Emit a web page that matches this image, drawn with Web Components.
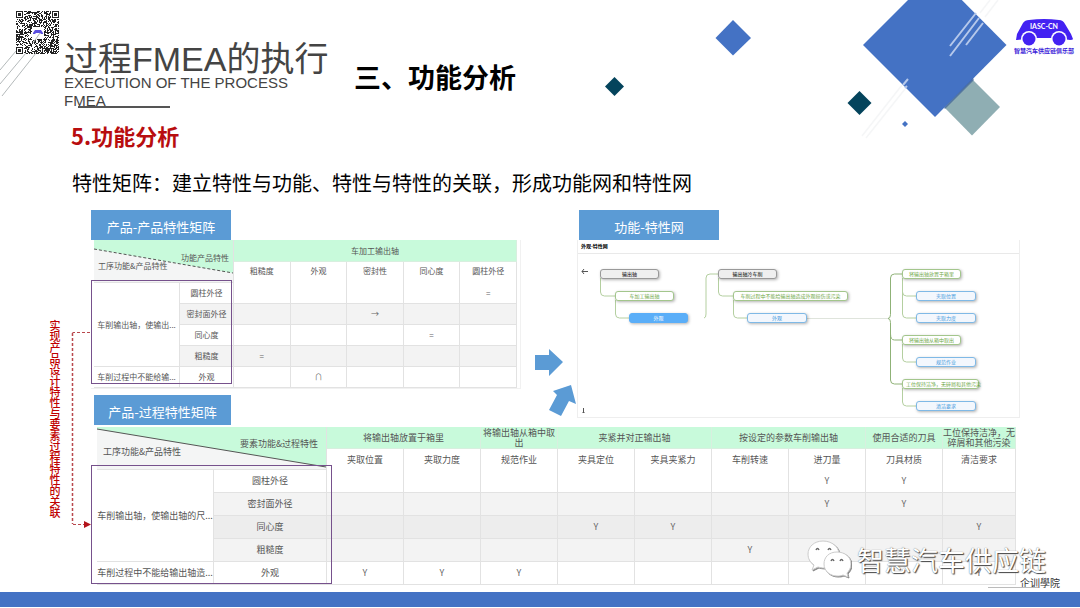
<!DOCTYPE html>
<html lang="zh-CN">
<head>
<meta charset="UTF-8">
<meta name="viewport" content="width=device-width, initial-scale=1">
<title>过程FMEA的执行</title>
<style>
    body {
        margin: 0;
        background: #fff;
        color: #000;
        font-family: "Liberation Sans", "Noto Sans CJK SC", sans-serif;
    }
</style>
</head>
<body>
<fmea-slide>
    <slide-header slot="header">
        <span slot="title">过程FMEA的执行</span>
        <span slot="subtitle">EXECUTION OF THE PROCESS FMEA</span>
        <span slot="section">三、功能分析</span>
    </slide-header>
    <span slot="topic">5.功能分析</span>
    <span slot="summary">特性矩阵：建立特性与功能、特性与特性的关联，形成功能网和特性网</span>
    <link-rail slot="rail">实现产品设计特性与要素过程特性的关联</link-rail>
    <block-label slot="label-product">产品-产品特性矩阵</block-label>
    <feature-matrix slot="matrix-product" name="product"></feature-matrix>
    <flow-arrows slot="arrows"></flow-arrows>
    <block-label slot="label-net">功能-特性网</block-label>
    <feature-net slot="net">外观-特性网</feature-net>
    <block-label slot="label-process">产品-过程特性矩阵</block-label>
    <feature-matrix slot="matrix-process" name="process"></feature-matrix>
    <slide-watermark slot="watermark">智慧汽车供应链</slide-watermark>
    <span slot="school">企训學院</span>
</fmea-slide>

<script>
class FmeaSlide extends HTMLElement {
    constructor() {
        super();
        this.attachShadow({ mode: 'open' });
    }

    connectedCallback() {
        this.shadowRoot.innerHTML = `
            <style>
                :host {
                    position: relative;
                    display: flex;
                    flex-direction: column;
                    min-height: 100vh;
                    overflow: hidden;
                }

                .topic {
                    margin: 10px 0 0 71px;
                    font: bold 22px/30px "Noto Sans CJK SC", sans-serif;
                    color: #b80d0f;
                }

                .summary {
                    margin: 18px 0 0 72px;
                    font: 20px/30px "Noto Sans CJK SC", sans-serif;
                }

                .board {
                    display: grid;
                    grid-template-columns: 42px minmax(0, 430fr) 56px minmax(0, 443fr);
                    grid-template-rows: 185px 32px auto;
                    margin: 12px 60px 0 49px;
                }

                .rail {
                    grid-row: 1 / 4;
                }

                .arrows {
                    grid-area: 1 / 3 / 3 / 4;
                }

                .net {
                    grid-area: 1 / 4 / 3 / 5;
                }

                .process-label {
                    grid-area: 2 / 2;
                    padding-left: 3px;
                }

                .process {
                    grid-area: 3 / 2 / 4 / 5;
                    padding: 0 4px 0 6px;
                }

                .product-table {
                    padding: 0 3px;
                    border: 1px solid #f1f1f1;
                    border-width: 0 1px 1px 0;
                }

                .foot {
                    height: 15px;
                    margin: auto 0 1px;
                    background: #4472c4;
                }

                .watermark {
                    position: absolute;
                    right: 34px;
                    bottom: 28px;
                }

                .school {
                    position: absolute;
                    right: 20px;
                    bottom: 18px;
                    font: 10px/14px "Noto Sans CJK SC", sans-serif;
                    color: #333;
                }

                .school::before {
                    content: "";
                    position: absolute;
                    left: -32px;
                    bottom: 2px;
                    width: 50px;
                    height: 1px;
                    background: #bbb;
                }
            </style>
            <slide-decor></slide-decor>
            <slot name="header"></slot>
            <h2 class="topic"><slot name="topic"></slot></h2>
            <p class="summary"><slot name="summary"></slot></p>
            <main class="board">
                <div class="rail"><slot name="rail"></slot></div>
                <section>
                    <slot name="label-product"></slot>
                    <div class="product-table"><slot name="matrix-product"></slot></div>
                </section>
                <div class="arrows"><slot name="arrows"></slot></div>
                <section class="net">
                    <slot name="label-net"></slot>
                    <slot name="net"></slot>
                </section>
                <div class="process-label"><slot name="label-process"></slot></div>
                <div class="process"><slot name="matrix-process"></slot></div>
            </main>
            <div class="school"><slot name="school"></slot></div>
            <div class="watermark"><slot name="watermark"></slot></div>
            <footer class="foot"></footer>
        `;
    }
}

// Diamonds and hatching behind the header
class SlideDecor extends HTMLElement {
    constructor() {
        super();
        this.attachShadow({ mode: 'open' });
    }

    connectedCallback() {
        this.shadowRoot.innerHTML = `
            <style>
                :host {
                    position: absolute;
                    inset: 0 0 auto 0;
                    height: 150px;
                    z-index: -1;
                }

                svg {
                    position: absolute;
                    top: 0;
                }

                .right {
                    right: 0;
                }

                .left {
                    left: 0;
                }
            </style>
            <svg class="left" width="60" height="110" fill="none" stroke="#b4b9ba">
                <path d="M16 51 0 70M26 53 0 84M40 48 2 96"/>
            </svg>
            <svg class="right" width="480" height="150" viewBox="600 0 480 150">
                <path fill="#8faeb3" d="m972 79 28 28-28 28.500-28-28.500z"/>
                <path fill="#4472c4" d="m935-27 71.500 72L935 117l-72-72z"/>
                <path fill="#2d5292" opacity=".6" d="m973 78-29 30 1 1 29-29z"/>
                <path fill="#4472c4" d="m733 20 18 18-18 17.500L715.500 38z"/>
                <path fill="#4472c4" d="m905 121 3 3-3 3-3-3z"/>
                <path fill="#04445c" d="m614.500 77 9.500 9.500-9.500 9.500-9.500-9.500z"/>
                <path fill="#04445c" d="m859.500 91 12 12-12 12-12-12z"/>
                <path fill="none" stroke="#f5f6f7" stroke-width="1.500" d="M902 85 862 136M905 89 866 138M998 0 985 17M990 0 980 13"/>
                <path fill="none" stroke="#b5c8eb" stroke-width="2" d="M976 13 950 46M979 18 950 56M983 23 966 45M908 79 903 85M907 86 905 88"/>
            </svg>
        `;
    }
}

class SlideHeader extends HTMLElement {
    constructor() {
        super();
        this.attachShadow({ mode: 'open' });
    }

    connectedCallback() {
        this.shadowRoot.innerHTML = `
            <style>
                :host {
                    display: flex;
                    align-items: flex-start;
                    height: 99px;
                    padding: 11px 6px 0 16px;
                }

                .titles {
                    position: relative;
                    width: 266px;
                    margin: 33px 0 0 5px;
                    color: #444;
                }

                .title {
                    margin: 0;
                    font-size: 34px;
                    font-weight: 400;
                    line-height: 30px;
                    white-space: nowrap;
                }

                .subtitle {
                    margin: 0;
                    font-size: 15px;
                    line-height: 18px;
                }

                .titles::after {
                    content: "";
                    position: absolute;
                    left: 14px;
                    bottom: 2px;
                    width: 92px;
                    height: 2px;
                    background: #555;
                }

                .section {
                    margin: 48px 0 0 24px;
                    font: bold 27px/36px "Noto Sans CJK SC", sans-serif;
                }

                club-logo {
                    margin: 7px 0 0 auto;
                }
            </style>
            <qr-code></qr-code>
            <div class="titles">
                <h1 class="title"><slot name="title"></slot></h1>
                <p class="subtitle"><slot name="subtitle"></slot></p>
            </div>
            <div class="section"><slot name="section"></slot></div>
            <club-logo>智慧汽车供应链俱乐部</club-logo>
        `;
    }
}

class ClubLogo extends HTMLElement {
    constructor() {
        super();
        this.attachShadow({ mode: 'open' });
    }

    connectedCallback() {
        this.shadowRoot.innerHTML = `
            <style>
                :host {
                    display: flex;
                    flex-direction: column;
                    align-items: center;
                    font: bold 6px/9px "Noto Sans CJK SC", sans-serif;
                    color: #3b22d8;
                    white-space: nowrap;
                }
            </style>
            <svg width="58" height="28" viewBox="0 0 58 28">
                <path fill="#4322f2" d="M1 22 2 16 8 5Q10 2 14 2 29 0 44 2q4 0 6 4l6 10 2 5q0 1-3 1L41 20H20L2 22z"/>
                <circle cx="14" cy="21" r="8" fill="#fff"/>
                <circle cx="44" cy="21" r="8" fill="#fff"/>
                <circle cx="14" cy="21" r="6.500" fill="#4322f2"/>
                <circle cx="44" cy="21" r="6.500" fill="#4322f2"/>
                <text x="29" y="11" fill="#fff" font-family="Lato, sans-serif" font-size="7" font-weight="700" text-anchor="middle">IASC-CN</text>
            </svg>
            <slot></slot>
        `;
    }
}

class QrCode extends HTMLElement {
    constructor() {
        super();
        this.attachShadow({ mode: 'open' });
    }

    connectedCallback() {
        const size = 43;
        let seed = 77;
        let cells = '';
        for (let y = 0; y < size; y++) {
            for (let x = 0; x < size; x++) {
                seed = (seed * 1103515245 + 12345) % 2147483648;
                const finder = (x < 8 && y < 8) || (x > 34 && y < 8) || (x < 8 && y > 34);
                const middle = x > 15 && x < 28 && y > 15 && y < 28;
                if (!finder && !middle && seed / 2147483648 > 0.47) {
                    cells += `M${x} ${y}h1v1h-1z`;
                }
            }
        }
        const finder = (x, y) => `
            <rect x="${x + 0.5}" y="${y + 0.5}" width="6" height="6" fill="none" stroke="#222"/>
            <rect x="${x + 2}" y="${y + 2}" width="3" height="3" fill="#222"/>`;

        this.shadowRoot.innerHTML = `
            <style>
                :host {
                    display: block;
                    flex: none;
                    width: 43px;
                    height: 43px;
                }
            </style>
            <svg width="43" height="43" viewBox="0 0 43 43" role="img">
                <path fill="#222" d="${cells}"/>
                ${finder(0, 0)}${finder(36, 0)}${finder(0, 36)}
                <path fill="#5b4fe0" d="m17 22 2-3h6l2 3v1h-2l-1-1h-4l-1 1h-2z"/>
                <path stroke="#b4b9ba" d="m24 22-7 10"/>
            </svg>
        `;
    }
}

class BlockLabel extends HTMLElement {
    constructor() {
        super();
        this.attachShadow({ mode: 'open' });
    }

    connectedCallback() {
        this.shadowRoot.innerHTML = `
            <style>
                :host {
                    display: block;
                    width: 140px;
                    box-sizing: border-box;
                    padding-top: 3px;
                    background: #5b9bd5;
                    color: #fff;
                    font: 13px/27px "Noto Sans CJK SC", sans-serif;
                    text-align: center;
                }

                :host([slot="label-net"]) {
                    margin-left: 2px;
                }

                :host([slot="label-process"]) {
                    width: 137px;
                }
            </style>
            <slot></slot>
        `;
    }
}

// Vertical caption with the dashed link between the two framed blocks
class LinkRail extends HTMLElement {
    constructor() {
        super();
        this.attachShadow({ mode: 'open' });
    }

    connectedCallback() {
        this.shadowRoot.innerHTML = `
            <style>
                :host {
                    display: flex;
                    justify-content: space-between;
                    padding-top: 110px;
                    color: #c00000;
                }

                .caption {
                    writing-mode: vertical-rl;
                    font: 500 11px/12px "Noto Sans CJK SC", sans-serif;
                    white-space: nowrap;
                }

                svg {
                    margin-top: 7px;
                }
            </style>
            <span class="caption"><slot></slot></span>
            <svg width="20" height="204" fill="none">
                <path stroke="#b9474d" stroke-dasharray="3 2" d="M19 5.500H1.500"/>
                <path stroke="#b9474d" stroke-width="1.500" stroke-dasharray="3 2" d="M1.500 6v191"/>
                <path stroke="#b9474d" stroke-dasharray="3 2" d="M2 197.500h11"/>
                <path fill="#b4141c" d="m13 194 7 3.500-7 3.500z"/>
            </svg>
        `;
    }
}

const MATRICES = {
    product: {
        leftCols: [86, 54],
        lastCol: 'auto',
        corner: { row: '工序功能&amp;产品特性', col: '功能产品特性', line: [9, 33], dash: '3 2' },
        groups: [['车加工输出轴', 5]],
        columns: ['粗糙度', '外观', '密封性', '同心度', '圆柱外径'],
        functions: [['车削输出轴，使输出...', 4], ['车削过程中不能给输...', 1]],
        rows: [
            ['圆柱外径', ['', '', '', '', '=']],
            ['密封面外径', ['', '', '→', '', '']],
            ['同心度', ['', '', '', '=', '']],
            ['粗糙度', ['=', '', '', '', '']],
            ['外观', ['', '∩', '', '', '']]
        ],
        shades: ['', 'grey', '', 'grey', '']
    },
    process: {
        leftCols: [117, 113],
        lastCol: '73px',
        corner: { row: '工序功能&amp;产品特性', col: '要素功能&amp;过程特性', line: [2, 40], dash: 'none' },
        groups: [['将输出轴放置于箱里', 2], ['将输出轴从箱中取出', 1], ['夹紧并对正输出轴', 2], ['按设定的参数车削输出轴', 2], ['使用合适的刀具', 1], ['工位保持洁净，无碎屑和其他污染', 1]],
        columns: ['夹取位置', '夹取力度', '规范作业', '夹具定位', '夹具夹紧力', '车削转速', '进刀量', '刀具材质', '清洁要求'],
        functions: [['车削输出轴，使输出轴的尺...', 4], ['车削过程中不能给输出轴造...', 1]],
        rows: [
            ['圆柱外径', ['', '', '', '', '', '', 'Y', 'Y', '']],
            ['密封面外径', ['', '', '', '', '', '', 'Y', 'Y', '']],
            ['同心度', ['', '', '', 'Y', 'Y', '', '', '', 'Y']],
            ['粗糙度', ['', '', '', '', '', 'Y', '', '', '']],
            ['外观', ['Y', 'Y', 'Y', '', '', '', '', '', 'Y']]
        ],
        shades: ['', 'grey', 'dark', 'grey', '']
    }
};

class FeatureMatrix extends HTMLElement {
    constructor() {
        super();
        this.attachShadow({ mode: 'open' });
    }

    connectedCallback() {
        const data = MATRICES[this.getAttribute('name')];
        const { corner } = data;
        const starts = {};
        let at = 0;
        data.functions.forEach(([text, span]) => {
            starts[at] = `<th class="function" rowspan="${span}">${text}</th>`;
            at += span;
        });

        this.shadowRoot.innerHTML = `
            <style>
                :host {
                    --row: 23px;
                    --text: 9px;
                    position: relative;
                    display: block;
                }

                :host([name="product"]) {
                    --row: 21px;
                    --text: 8px;
                }

                table {
                    width: 100%;
                    table-layout: fixed;
                    border-collapse: separate;
                    border-spacing: 0;
                    font: var(--text)/10px "Noto Sans CJK SC", sans-serif;
                    color: #555;
                }

                th,
                td {
                    box-sizing: border-box;
                    height: var(--row);
                    padding: 0;
                    border: 1px solid #e2e2e2;
                    border-width: 0 1px 1px 0;
                    font-weight: 400;
                    text-align: center;
                }

                td {
                    color: #666;
                }

                .group {
                    height: 22px;
                    background: #c8fadb;
                    border-color: #d8efdf;
                }

                .column {
                    height: 21px;
                    border-bottom: 0;
                }

                :host([name="product"]) .column {
                    padding-bottom: 4px;
                }

                .corner {
                    position: relative;
                    background: #f4f5f5;
                }

                .corner svg {
                    position: absolute;
                    inset: 0;
                    width: 100%;
                    height: 100%;
                }

                .corner div {
                    position: relative;
                    display: flex;
                    justify-content: space-between;
                    align-items: flex-start;
                    padding: 0 8px 0 6px;
                }

                .corner span:first-child {
                    margin-top: 8px;
                }

                :host([name="product"]) .corner div {
                    padding: 2px 4px 0;
                }

                .function {
                    overflow: hidden;
                    white-space: nowrap;
                    background: #fff;
                }

                .grey th:not(.function),
                .grey td {
                    background: #f3f3f3;
                }

                .dark th:not(.function),
                .dark td {
                    background: #ededed;
                }

                .frame {
                    position: absolute;
                    box-sizing: border-box;
                    left: -6px;
                    top: 38px;
                    bottom: 1px;
                    width: 241px;
                    border: 1px solid #76518c;
                }

                :host([name="product"]) .frame {
                    left: -3px;
                    top: 40px;
                    bottom: 4px;
                    width: 141px;
                }
            </style>
            <table>
                <colgroup>
                    ${data.leftCols.map(width => `<col style="width: ${width}px">`).join('')}
                    <col span="${data.columns.length - 1}">
                    <col style="width: ${data.lastCol}">
                </colgroup>
                <thead>
                    <tr>
                        <th class="corner" colspan="2" rowspan="2">
                            <svg viewBox="0 0 100 42" preserveAspectRatio="none">
                                <path fill="#c8fadb" d="M0 0h100v${corner.line[1]}L0 ${corner.line[0]}z"/>
                                <path stroke="#555" stroke-dasharray="${corner.dash}" vector-effect="non-scaling-stroke" d="M0 ${corner.line[0]}l100 ${corner.line[1] - corner.line[0]}"/>
                            </svg>
                            <div><span>${corner.row}</span><span>${corner.col}</span></div>
                        </th>
                        ${data.groups.map(([text, span]) => `<th class="group" colspan="${span}">${text}</th>`).join('')}
                    </tr>
                    <tr>${data.columns.map(text => `<th class="column">${text}</th>`).join('')}</tr>
                </thead>
                <tbody>
                    ${data.rows.map(([name, marks], i) => `
                        <tr class="${data.shades[i]}">
                            ${starts[i] || ''}
                            <th>${name}</th>
                            ${marks.map(mark => `<td>${mark}</td>`).join('')}
                        </tr>`).join('')}
                </tbody>
            </table>
            <div class="frame"></div>
        `;
    }
}

class FlowArrows extends HTMLElement {
    constructor() {
        super();
        this.attachShadow({ mode: 'open' });
    }

    connectedCallback() {
        this.shadowRoot.innerHTML = `
            <style>
                :host {
                    display: block;
                    padding-top: 135px;
                }

                svg {
                    display: block;
                }
            </style>
            <svg width="56" height="74" viewBox="0 0 56 74" fill="#5b9bd5">
                <path d="M14 10h14V4l14 13-14 14v-6H14z"/>
                <path d="m32 46 18-6 5 19-7-3-8 15-12-6 8-15z"/>
            </svg>
        `;
    }
}

// x, y, width, kind, text
const NODES = [
    [22, 15, 59, 'root', '输出轴'],
    [37, 37, 59, 'task', '车加工输出轴'],
    [51, 59, 59, 'focus', '外观'],
    [140, 15, 59, 'root', '输出轴冷车削'],
    [155, 37, 115, 'task', '车削过程中不能给输出轴造成外观损伤或污染'],
    [169, 59, 60, 'item', '外观'],
    [324, 15, 59, 'task', '将输出轴放置于箱里'],
    [338, 37, 60, 'item', '夹取位置'],
    [338, 59, 60, 'item', '夹取力度'],
    [324, 81, 59, 'task', '将输出轴从箱中取出'],
    [338, 103, 60, 'item', '规范作业'],
    [324, 125, 77, 'task wide', '工位保持洁净，无碎屑和其他污染'],
    [338, 147, 60, 'item', '清洁要求']
];

class FeatureNet extends HTMLElement {
    constructor() {
        super();
        this.attachShadow({ mode: 'open' });
    }

    connectedCallback() {
        const nodes = NODES.map(([x, y, width, kind, text]) =>
            `<div class="node ${kind}" style="left: ${x}px; top: ${y}px; width: ${width}px">${text}</div>`
        ).join('');

        this.shadowRoot.innerHTML = `
            <style>
                :host {
                    display: block;
                    border: 1px solid #eee;
                    border-top: 0;
                    font: 5px/9px "Noto Sans CJK SC", sans-serif;
                }

                header {
                    padding: 1px 3px 3px;
                    border-bottom: 1px solid #e9e9e9;
                    font-weight: bold;
                }

                .canvas {
                    position: relative;
                    height: 163px;
                }

                .canvas svg {
                    position: absolute;
                    top: 0;
                    left: 0;
                }

                .node {
                    position: absolute;
                    box-sizing: border-box;
                    height: 10px;
                    border: 1px solid;
                    border-radius: 3px;
                    line-height: 8px;
                    text-align: center;
                    white-space: nowrap;
                    box-shadow: 1px 1px 3px rgba(0, 0, 0, 0.3);
                }

                .root {
                    border-color: #999;
                    background: #efefef;
                }

                .task {
                    border-color: #a3c68c;
                    background: #fff;
                    color: #6fa848;
                }

                .item {
                    border-color: #7fb9e6;
                    background: #f3f7fd;
                    color: #3f97dc;
                }

                .focus {
                    border-color: #5aaef8;
                    background: #5aaef8;
                    color: #fff;
                }

                .wide {
                    padding-left: 3px;
                    text-align: left;
                }
            </style>
            <header><slot></slot></header>
            <div class="canvas">
                <svg width="440" height="163" fill="none" stroke="#b4cfa0">
                    <path d="M22.500 24v14q0 4 4 4H37M37.500 46v14q0 4 4 4H51"/>
                    <path d="M126 64q2 0 2-4V24q0-4 4-4h8M140.500 24v14q0 4 4 4H155M155.500 46v14q0 4 4 4H169"/>
                    <path stroke="#dfe4dc" d="M229 64.500h82"/>
                    <path stroke="#8fb277" d="M310 64.500q2.500 0 2.500-4V24q0-4 4-4H324M310 64.500q2.500 0 2.500 4V126q0 4 4 4H324M312.500 80q0 6 4 6H324"/>
                    <path d="M324.500 24v14q0 4 4 4H338M324.500 38v22q0 4 4 4H338M324.500 90v14q0 4 4 4H338M324.500 134v14q0 4 4 4H338"/>
                    <path stroke="#555" d="M4 17.500h6M6 15l-2 2.500L6 20M5.500 154v5M4.500 158l1 1 1-1"/>
                </svg>
                ${nodes}
            </div>
        `;
    }
}

class SlideWatermark extends HTMLElement {
    constructor() {
        super();
        this.attachShadow({ mode: 'open' });
    }

    connectedCallback() {
        this.shadowRoot.innerHTML = `
            <style>
                :host {
                    display: flex;
                    align-items: center;
                    gap: 6px;
                    font: 27px/40px "Noto Sans CJK SC", sans-serif;
                    color: #fff;
                    text-shadow: 1px 1px 1px #444, 0 0 1px #666;
                    white-space: nowrap;
                }

                svg {
                    filter: drop-shadow(1px 1px 0 #888);
                }
            </style>
            <svg width="44" height="40" viewBox="0 0 44 40" fill="#fff" stroke="#ccc">
                <path d="M16 1C7 1 1 7 1 14c0 5 2 8 6 11l-2 5 6-3c3 1 6 1 9 1 7-1 12-7 12-14C32 7 25 1 16 1z"/>
                <path d="M30 12c-8 0-13 5-13 12s6 12 13 12c2 0 4 0 6-1l5 2-1-4c2-2 4-5 4-9 0-7-6-12-14-12z"/>
                <path fill="none" stroke="#666" stroke-width="1.500" d="M9 10q1.500-3 3 0M21 10q1.500-3 3 0M24 21q1.500-3 3 0M33 21q1.500-3 3 0"/>
            </svg>
            <slot></slot>
        `;
    }
}

customElements.define('slide-decor', SlideDecor);
customElements.define('qr-code', QrCode);
customElements.define('club-logo', ClubLogo);
customElements.define('slide-header', SlideHeader);
customElements.define('block-label', BlockLabel);
customElements.define('link-rail', LinkRail);
customElements.define('feature-matrix', FeatureMatrix);
customElements.define('flow-arrows', FlowArrows);
customElements.define('feature-net', FeatureNet);
customElements.define('slide-watermark', SlideWatermark);
customElements.define('fmea-slide', FmeaSlide);
</script>
</body>
</html>
